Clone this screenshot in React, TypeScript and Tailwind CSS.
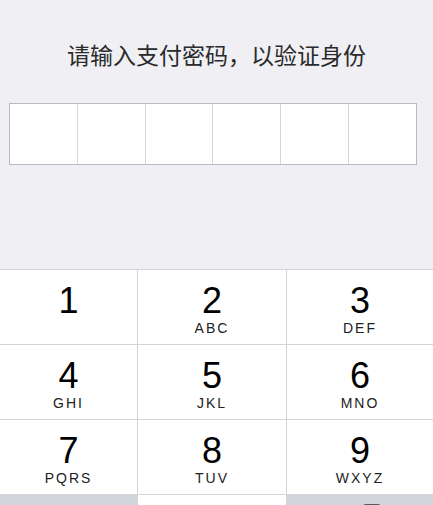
import { Delete } from "lucide-react";

const KEYS = [
  { digit: "1", letters: "" },
  { digit: "2", letters: "ABC" },
  { digit: "3", letters: "DEF" },
  { digit: "4", letters: "GHI" },
  { digit: "5", letters: "JKL" },
  { digit: "6", letters: "MNO" },
  { digit: "7", letters: "PQRS" },
  { digit: "8", letters: "TUV" },
  { digit: "9", letters: "WXYZ" },
];

const PinBoxes = () => (
  <div className="ml-[9px] flex h-[62px] w-[408px] border border-[#b9b9bf] bg-white">
    {[0, 1, 2, 3, 4, 5].map((i) => (
      <div
        key={i}
        className={`flex-1 ${i < 5 ? "border-r border-[#d6d6da]" : ""}`}
      />
    ))}
  </div>
);

const Key = ({ digit, letters }: { digit: string; letters: string }) => (
  <button className="flex h-[74px] flex-col items-center bg-white pt-[11px]">
    <span className="text-[36px] leading-[40px] text-black">{digit}</span>
    {letters && (
      <span className="text-[14px] leading-[14px] tracking-[2px] text-[#222]">
        {letters}
      </span>
    )}
  </button>
);

const App = () => {
  return (
    <div
      className="flex h-[505px] w-[433px] flex-col overflow-hidden bg-[#efeff4]"
      style={{ fontFamily: '"Liberation Sans", Arial, "Noto Sans CJK SC", sans-serif' }}
    >
      <h1
        className="mt-[38px] text-center text-[23px] leading-[32px] text-[#2a2a2a]"
        style={{ fontFamily: '"Noto Sans CJK SC", sans-serif' }}
      >
        请输入支付密码，以验证身份
      </h1>

      <div className="mt-[33px]">
        <PinBoxes />
      </div>

      {/* number pad */}
      <div className="mt-[104px] grid grid-cols-[137px_148px_1fr] gap-px border-t border-[#d3d3d8] bg-[#d3d3d8]">
        {KEYS.map((k) => (
          <Key key={k.digit} digit={k.digit} letters={k.letters} />
        ))}
        <div className="h-[74px] bg-[#d1d4da]" />
        <div className="h-[74px] bg-white" />
        <div className="flex h-[74px] justify-center bg-[#d1d4da] pt-[4px]">
          <Delete size={30} strokeWidth={1.5} className="ml-[16px] text-[#333]" />
        </div>
      </div>
    </div>
  );
};

export default App;
